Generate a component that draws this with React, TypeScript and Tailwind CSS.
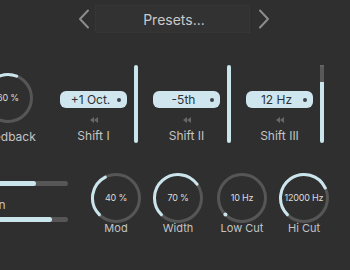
import React from "react";

const ACCENT = "#cbe5ed";

function polar(c: number, r: number, deg: number) {
  const rad = ((deg - 90) * Math.PI) / 180;
  return [c + r * Math.cos(rad), c + r * Math.sin(rad)];
}

const Knob: React.FC<{ value: number; text: string }> = ({ value, text }) => {
  const c = 26;
  const r = 23.5;
  const start = -135;
  const end = start + 270 * value;
  const [sx, sy] = polar(c, r, start);
  const [ex, ey] = polar(c, r, end);
  const large = end - start > 180 ? 1 : 0;
  return (
    <div className="relative w-[52px] h-[52px] shrink-0">
      <svg width="52" height="52" viewBox="0 0 52 52">
        <circle cx={c} cy={c} r={r} fill="none" stroke="#565656" strokeWidth="3" />
        {value > 0.01 ? (
          <path
            d={`M ${sx} ${sy} A ${r} ${r} 0 ${large} 1 ${ex} ${ey}`}
            fill="none"
            stroke={ACCENT}
            strokeWidth="3"
            strokeLinecap="round"
          />
        ) : (
          <circle cx={sx} cy={sy} r="2" fill={ACCENT} />
        )}
      </svg>
      <div className="absolute inset-0 flex items-center justify-center text-[9px] text-[#dcdcdc] whitespace-nowrap tracking-[-0.2px]">
        {text}
      </div>
    </div>
  );
};

const Chevron: React.FC<{ dir: "left" | "right" }> = ({ dir }) => (
  <svg width="14" height="20" viewBox="0 0 14 20">
    <path
      d={dir === "left" ? "M11 1.5 L3 10 L11 18.5" : "M3 1.5 L11 10 L3 18.5"}
      fill="none"
      stroke="#8c8c8c"
      strokeWidth="2"
      strokeLinecap="round"
      strokeLinejoin="round"
    />
  </svg>
);

const ShiftColumn: React.FC<{
  value: string;
  label: string;
  dim?: number;
  gap?: string;
}> = ({ value, label, dim = 0, gap }) => (
  <div className={`flex items-start ${gap ?? ""}`}>
    <div className="w-[67px] flex flex-col items-center">
      <div className="relative mt-[26px] h-[17px] w-full rounded-[6px] bg-[#cfe6ee] flex items-center justify-center">
        <span className="text-[12px] leading-none text-[#2c3235] pr-[6px]">{value}</span>
        <span className="absolute right-[6px] top-[6.5px] w-[4px] h-[4px] rounded-full bg-[#3a4448]" />
      </div>
      <svg className="mt-[9px]" width="8" height="6" viewBox="0 0 8 6">
        <path d="M4 0 L0 3 L4 6 Z M8 0 L4 3 L8 6 Z" fill="#676767" />
      </svg>
      <div className="mt-[6px] text-[12px] leading-[14px] text-[#c4c4c4]">{label}</div>
    </div>
    <div className="ml-[7px] w-[4px] h-[78px] rounded-full overflow-hidden flex flex-col bg-[#cbe5ed]">
      {dim > 0 && <div className="w-full h-[17px] bg-[#595959]" />}
    </div>
  </div>
);

const KnobColumn: React.FC<{
  value: number;
  text: string;
  label: string;
  extra?: string;
}> = ({ value, text, label, extra }) => (
  <div className={`w-[62px] flex flex-col items-center pt-[12px] ${extra ?? ""}`}>
    <Knob value={value} text={text} />
    <div className="mt-[-2px] text-[11px] leading-[12px] text-[#c4c4c4]">{label}</div>
  </div>
);

export default function App() {
  return (
    <div className="w-[350px] h-[270px] overflow-hidden bg-[#2f2f2f] font-['Inter',sans-serif]">
      {/* Preset header */}
      <div className="flex items-center pl-[77px] pt-[5px]">
        <Chevron dir="left" />
        <div className="ml-[4px] w-[155px] h-[28px] bg-[#323232] border border-[#363636] flex items-center justify-center">
          <span className="text-[14px] text-[#c9c9c9] pl-[3px]">Presets...</span>
        </div>
        <div className="ml-[7px]">
          <Chevron dir="right" />
        </div>
      </div>

      {/* Feedback + shifts */}
      <div className="mt-[32px] flex items-start h-[78px]">
        <div className="w-[60px] ml-[-22px] shrink-0 flex flex-col items-center pt-[7px]">
          <Knob value={0.58} text="60 %" />
          <div className="mt-[6px] text-[12px] leading-[14px] text-[#c4c4c4]">Feedback</div>
        </div>
        <ShiftColumn value="+1 Oct." label="Shift I" gap="ml-[22px]" />
        <ShiftColumn value="-5th" label="Shift II" gap="ml-[15px]" />
        <ShiftColumn value="12 Hz" label="Shift III" dim={1} gap="ml-[15px]" />
      </div>

      {/* Sliders + knobs */}
      <div className="mt-[17px] flex items-start">
        <div className="w-[88px] ml-[-20px] shrink-0 flex flex-col pt-[21px]">
          <div className="h-[5px] w-full rounded-full bg-[#565656] overflow-hidden">
            <div className="h-full w-[56px] rounded-full bg-[#cbe5ed]" />
          </div>
          <div className="mt-[12px] text-[12px] leading-[14px] text-[#c4c4c4]">Gain</div>
          <div className="mt-[5px] h-[5px] w-full rounded-full bg-[#565656] overflow-hidden">
            <div className="h-full w-[72px] rounded-full bg-[#cbe5ed]" />
          </div>
        </div>
        <KnobColumn value={0.4} text="40 %" label="Mod" extra="ml-[17px]" />
        <KnobColumn value={0.7} text="70 %" label="Width" />
        <KnobColumn value={0} text="10 Hz" label="Low Cut" extra="ml-[2px]" />
        <KnobColumn value={0.74} text="12000 Hz" label="Hi Cut" />
      </div>
    </div>
  );
}
